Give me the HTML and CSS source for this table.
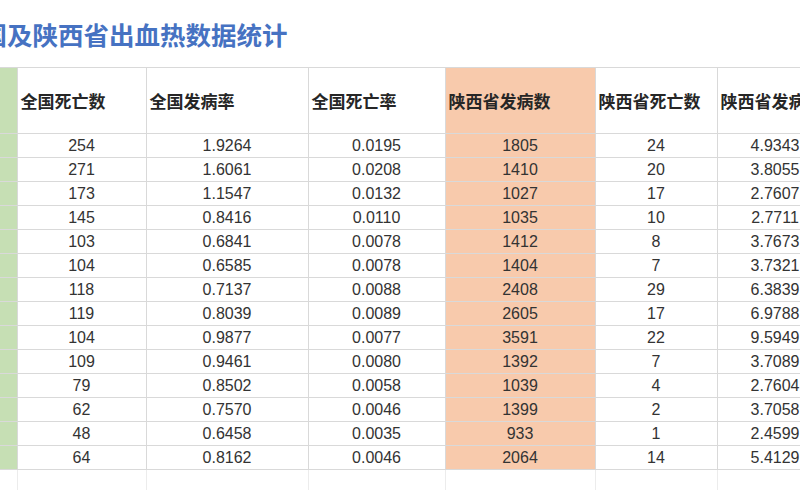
FILE: index.html
```html
<!DOCTYPE html>
<html lang="zh">
<head>
<meta charset="utf-8">
<link rel="stylesheet" href="styles.css">
</head>
<body>
<div class="page">
  <h1 class="title">全国及陕西省出血热数据统计</h1>
  <table class="sheet">
    <colgroup>
      <col class="w-g"><col class="w-1"><col class="w-2"><col class="w-3"><col class="w-4"><col class="w-5"><col class="w-6">
    </colgroup>
    <thead>
      <tr>
        <th class="g"></th>
        <th>全国死亡数</th>
        <th>全国发病率</th>
        <th>全国死亡率</th>
        <th class="o">陕西省发病数</th>
        <th>陕西省死亡数</th>
        <th>陕西省发病率</th>
      </tr>
    </thead>
    <tbody>
      <tr><td class="g"></td><td>254</td><td>1.9264</td><td>0.0195</td><td class="o">1805</td><td>24</td><td>4.9343</td></tr>
      <tr><td class="g"></td><td>271</td><td>1.6061</td><td>0.0208</td><td class="o">1410</td><td>20</td><td>3.8055</td></tr>
      <tr><td class="g"></td><td>173</td><td>1.1547</td><td>0.0132</td><td class="o">1027</td><td>17</td><td>2.7607</td></tr>
      <tr><td class="g"></td><td>145</td><td>0.8416</td><td>0.0110</td><td class="o">1035</td><td>10</td><td>2.7711</td></tr>
      <tr><td class="g"></td><td>103</td><td>0.6841</td><td>0.0078</td><td class="o">1412</td><td>8</td><td>3.7673</td></tr>
      <tr><td class="g"></td><td>104</td><td>0.6585</td><td>0.0078</td><td class="o">1404</td><td>7</td><td>3.7321</td></tr>
      <tr><td class="g"></td><td>118</td><td>0.7137</td><td>0.0088</td><td class="o">2408</td><td>29</td><td>6.3839</td></tr>
      <tr><td class="g"></td><td>119</td><td>0.8039</td><td>0.0089</td><td class="o">2605</td><td>17</td><td>6.9788</td></tr>
      <tr><td class="g"></td><td>104</td><td>0.9877</td><td>0.0077</td><td class="o">3591</td><td>22</td><td>9.5949</td></tr>
      <tr><td class="g"></td><td>109</td><td>0.9461</td><td>0.0080</td><td class="o">1392</td><td>7</td><td>3.7089</td></tr>
      <tr><td class="g"></td><td>79</td><td>0.8502</td><td>0.0058</td><td class="o">1039</td><td>4</td><td>2.7604</td></tr>
      <tr><td class="g"></td><td>62</td><td>0.7570</td><td>0.0046</td><td class="o">1399</td><td>2</td><td>3.7058</td></tr>
      <tr><td class="g"></td><td>48</td><td>0.6458</td><td>0.0035</td><td class="o">933</td><td>1</td><td>2.4599</td></tr>
      <tr><td class="g"></td><td>64</td><td>0.8162</td><td>0.0046</td><td class="o">2064</td><td>14</td><td>5.4129</td></tr>
      <tr class="tail"><td class="blank"></td><td></td><td></td><td></td><td></td><td></td><td></td></tr>
    </tbody>
  </table>
</div>
</body>
</html>
```

FILE: styles.css
```css
html, body {
  margin: 0;
  padding: 0;
  background: #ffffff;
}

.page {
  width: 800px;
  height: 500px;
  overflow: hidden;
  font-family: "Liberation Sans", Arial, "Noto Sans CJK SC", sans-serif;
  color: #333333;
}

.title {
  margin: 17px 0 16px -44px;
  height: 34px;
  line-height: 34px;
  font-family: "Noto Sans CJK SC", sans-serif;
  font-size: 25.5px;
  font-weight: 700;
  color: #4672c2;
  white-space: nowrap;
}

.sheet {
  table-layout: fixed;
  border-collapse: collapse;
  width: 833px;
}

.w-g { width: 17px; }
.w-1 { width: 129px; }
.w-2 { width: 162px; }
.w-3 { width: 137px; }
.w-4 { width: 150px; }
.w-5 { width: 122px; }
.w-6 { width: 116px; }

.sheet th,
.sheet td {
  border: 1px solid #d9d9d9;
  padding: 0;
  white-space: nowrap;
  overflow: hidden;
}

.sheet th {
  height: 65px;
  text-align: left;
  padding-left: 3px;
  font-family: "Noto Sans CJK SC", sans-serif;
  font-size: 17px;
  font-weight: 700;
  color: #262626;
}

.sheet td {
  height: 23px;
  text-align: center;
  font-size: 16px;
  line-height: 23px;
  color: #333333;
}

.sheet .g {
  background: #c6dfb4;
  border-left: none;
}

.sheet .o {
  background: #f8caac;
}

.sheet .tail td {
  height: 20px;
  border-bottom: none;
  border-color: #ececec;
  border-top-color: #d9d9d9;
}

.sheet .tail .blank {
  border-left: none;
  border-bottom: none;
}
```
